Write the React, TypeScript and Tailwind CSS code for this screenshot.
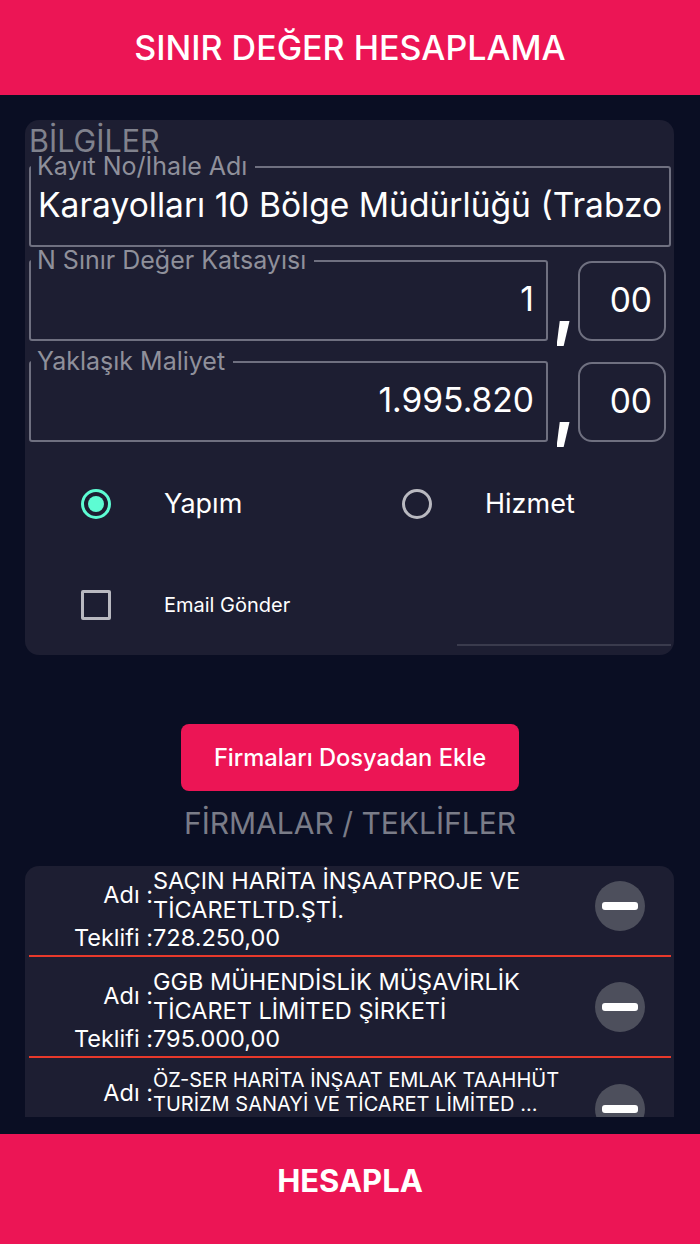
const firms = [
  { name: ['SAÇIN HARİTA İNŞAATPROJE VE', 'TİCARETLTD.ŞTİ.'], offer: '728.250,00' },
  { name: ['GGB MÜHENDİSLİK MÜŞAVİRLİK', 'TİCARET LİMİTED ŞİRKETİ'], offer: '795.000,00' },
]

function Field({ label, value, right, width }: { label: string; value: string; right?: boolean; width: string }) {
  return (
    <fieldset className={`${width} shrink-0 border-2 border-[#6f7080] rounded-[3px] min-w-0`}>
      <legend className="pl-[6px] pr-[8px] text-[25px] leading-[24px] text-[#8f909b] whitespace-nowrap">
        <span className="block -translate-y-[1px]">{label}</span>
      </legend>
      <div className="h-[67px] -mt-[1px] pb-[12px] flex items-center pl-[7px] pr-[7px]">
        <div className={`flex-1 min-w-0 overflow-hidden whitespace-nowrap text-[33.6px] text-white ${right ? 'text-right pr-[5px]' : ''}`}>
          {value}
        </div>
      </div>
    </fieldset>
  )
}

function Decimal() {
  return (
    <>
      <div className="w-[30px] shrink-0 self-end flex justify-center">
        <div className="w-[13px] h-[25px] bg-white translate-y-[5px] [clip-path:polygon(25%_0,100%_0,55%_100%,0_100%)]"></div>
      </div>
      <div className="w-[88px] h-[80px] self-end shrink-0 border-2 border-[#6f7080] rounded-[14px] flex items-center justify-end pr-[12px] pb-[2px] text-[33.6px] text-white">
        00
      </div>
    </>
  )
}

function MinusButton() {
  return (
    <div className="w-[50px] h-[50px] rounded-full bg-[#4d4f5c] flex items-center justify-center shrink-0">
      <div className="w-[36px] h-[8px] rounded-[3px] bg-white"></div>
    </div>
  )
}

export default function App() {
  return (
    <div className="w-[700px] h-[1244px] flex flex-col bg-[#0a0e23] font-['Inter',sans-serif] overflow-hidden">
      <header className="h-[95px] shrink-0 bg-[#ec1555] flex items-center justify-center text-[34px] font-medium text-white">
        SINIR DEĞER HESAPLAMA
      </header>

      <main className="flex-1 min-h-0 flex flex-col pl-[25px] pt-[25px]">
        <section className="w-[649px] h-[535px] shrink-0 bg-[#1d1e32] rounded-[14px] pl-[4px] pr-[3px] relative">
          <div className="h-[35px] pt-[5px] text-[30.5px] leading-[32px] text-[#80828d]">BİLGİLER</div>

          <Field label="Kayıt No/İhale Adı" value="Karayolları 10 Bölge Müdürlüğü (Trabzon)" width="w-[642px]" />

          <div className="flex mt-[2px]">
            <Field label="N Sınır Değer Katsayısı" value="1" right width="w-[519px]" />
            <Decimal />
          </div>

          <div className="flex mt-[9px]">
            <Field label="Yaklaşık Maliyet" value="1.995.820" right width="w-[519px]" />
            <Decimal />
          </div>

          <div className="flex items-center h-[30px] mt-[47px] text-[27px] text-white">
            <div className="w-[30px] h-[30px] ml-[52px] rounded-full border-[3px] border-[#5dfcd3] flex items-center justify-center">
              <div className="w-[16px] h-[16px] rounded-full bg-[#5dfcd3]"></div>
            </div>
            <span className="ml-[53px] w-[238px]">Yapım</span>
            <div className="w-[30px] h-[30px] rounded-full border-[3px] border-[#b9b9c0]"></div>
            <span className="ml-[53px]">Hizmet</span>
          </div>

          <div className="flex items-center h-[30px] mt-[71px] text-[20px] text-white">
            <div className="w-[30px] h-[30px] ml-[52px] border-[3px] border-[#b9b9c0] rounded-[2px]"></div>
            <span className="ml-[53px]">Email Gönder</span>
          </div>

          <div className="absolute right-[3px] top-[524px] w-[214px] h-[2px] bg-[#3a3b4d]"></div>
        </section>

        <button className="w-[338px] h-[67px] shrink-0 ml-[156px] mt-[69px] rounded-[8px] bg-[#ec1555] text-[23.7px] font-medium text-white">
          Firmaları Dosyadan Ekle
        </button>

        <div className="w-[650px] h-[36px] mt-[14px] shrink-0 text-center text-[30px] leading-[36px] text-[#7a7c88]">FİRMALAR / TEKLİFLER</div>

        <section className="w-[649px] h-[251px] mt-[25px] shrink-0 bg-[#1d1e32] rounded-t-[14px] pl-[4px] pr-[3px] overflow-hidden text-white">
          <div className="-mt-[10px]">
            {firms.map((f) => (
              <div key={f.offer} className="h-[101px] border-b-2 border-[#e8392b] flex items-center">
                <div className="flex-1 self-start pt-[10px] text-[23.5px] leading-[29px] whitespace-nowrap">
                  <div className="flex items-center h-[58px]">
                    <div className="w-[124px] pb-[2px] text-right whitespace-pre">Adı :</div>
                    <div>
                      {f.name.map((line) => <div key={line}>{line}</div>)}
                    </div>
                  </div>
                  <div className="flex -mt-[1px]">
                    <div className="w-[124px] text-right whitespace-pre">Teklifi :</div>
                    <div>{f.offer}</div>
                  </div>
                </div>
                <div className="mr-[26px]"><MinusButton /></div>
              </div>
            ))}
            <div className="h-[101px] flex items-center">
              <div className="flex-1 self-start pt-[10px] whitespace-nowrap">
                <div className="flex items-center h-[48px]">
                  <div className="w-[124px] text-right text-[23.5px] leading-[29px] whitespace-pre">Adı :</div>
                  <div className="text-[20px] leading-[24px]">
                    <div>ÖZ-SER HARİTA İNŞAAT EMLAK TAAHHÜT</div>
                    <div>TURİZM SANAYİ VE TİCARET LİMİTED ...</div>
                  </div>
                </div>
              </div>
              <div className="mr-[26px]"><MinusButton /></div>
            </div>
          </div>
        </section>
      </main>

      <footer className="h-[110px] shrink-0 pb-[16px] bg-[#ec1555] flex items-center justify-center text-[31px] font-bold text-white">
        HESAPLA
      </footer>
    </div>
  )
}
